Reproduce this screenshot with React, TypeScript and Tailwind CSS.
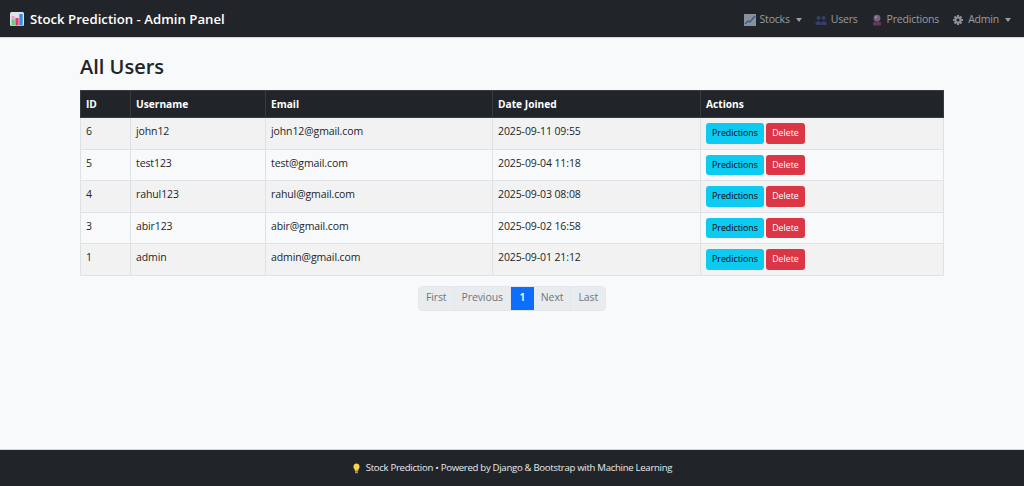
const font = "font-['Open_Sans','Noto_Sans',sans-serif]";

const users = [
  { id: 6, username: "john12", email: "john12@gmail.com", joined: "2025-09-11 09:55" },
  { id: 5, username: "test123", email: "test@gmail.com", joined: "2025-09-04 11:18" },
  { id: 4, username: "rahul123", email: "rahul@gmail.com", joined: "2025-09-03 08:08" },
  { id: 3, username: "abir123", email: "abir@gmail.com", joined: "2025-09-02 16:58" },
  { id: 1, username: "admin", email: "admin@gmail.com", joined: "2025-09-01 21:12" },
];

const pages = ["First", "Previous", "1", "Next", "Last"];

function ChartIcon() {
  return (
    <svg viewBox="0 0 14 14" className="w-[14px] h-[14px]">
      <rect x="0" y="0" width="14" height="14" rx="1.5" fill="#dfe2e8" />
      <rect x="1.5" y="8" width="3.2" height="5.5" fill="#5fd068" />
      <rect x="1.5" y="4" width="3.2" height="4" fill="#e9a0d0" />
      <rect x="5.4" y="6" width="3.2" height="7.5" fill="#e6376a" />
      <rect x="9.3" y="2" width="3.4" height="11.5" fill="#2f8fe0" />
    </svg>
  );
}

function TrendIcon() {
  return (
    <svg viewBox="0 0 12 12" className="w-[12px] h-[12px] opacity-60">
      <rect width="12" height="12" fill="#cfd8e6" />
      <path d="M1 10 L4 7 L6 8 L11 2" stroke="#3f7fc8" strokeWidth="1.4" fill="none" />
    </svg>
  );
}

function UsersIcon() {
  return (
    <svg viewBox="0 0 12 12" className="w-[12px] h-[12px] opacity-70">
      <circle cx="3.5" cy="4" r="2" fill="#3f4a8c" />
      <circle cx="8.5" cy="4" r="2" fill="#3f4a8c" />
      <path d="M0.5 11 V8.5 Q3.5 5.8 5.7 8.5 V11 Z" fill="#3f4a8c" />
      <path d="M6.3 11 V8.5 Q8.5 5.8 11.5 8.5 V11 Z" fill="#3f4a8c" />
    </svg>
  );
}

function ForecastIcon() {
  return (
    <svg viewBox="0 0 12 12" className="w-[12px] h-[12px] opacity-80">
      <circle cx="6" cy="4.2" r="3.4" fill="#8a6f9c" />
      <circle cx="5" cy="3.2" r="1" fill="#c9b8d4" />
      <rect x="2" y="8" width="8" height="3.4" rx="0.6" fill="#7a3f58" />
    </svg>
  );
}

function GearIcon() {
  return (
    <svg viewBox="0 0 12 12" className="w-[12px] h-[12px] opacity-70">
      <path d="M6 1 V11 M1 6 H11 M2.5 2.5 L9.5 9.5 M9.5 2.5 L2.5 9.5" stroke="#b9bec6" strokeWidth="2.2" />
      <circle cx="6" cy="6" r="3.5" fill="#b9bec6" />
      <circle cx="6" cy="6" r="1.5" fill="#212529" />
    </svg>
  );
}

function BulbIcon() {
  return (
    <svg viewBox="0 0 10 12" className="w-[9px] h-[11px]">
      <path d="M5 0.5 A3.6 3.6 0 0 1 7 7 V8.5 H3 V7 A3.6 3.6 0 0 1 5 0.5 Z" fill="#f5d547" />
      <rect x="3.4" y="9" width="3.2" height="2.2" fill="#9a9a8a" />
    </svg>
  );
}

function Caret() {
  return <span className="ml-[2px] w-0 h-0 border-x-[3.5px] border-x-transparent border-t-[4px] border-t-[#9b9d9e]" />;
}

function NavItem({ icon, label, caret }: { icon: React.ReactNode; label: string; caret?: boolean }) {
  return (
    <a className="flex items-center gap-[4px] text-[10.5px] tracking-[-0.2px] text-[#9b9d9e]">
      {icon}
      <span>{label}</span>
      {caret && <Caret />}
    </a>
  );
}

export default function App() {
  return (
    <div className={`${font} flex flex-col h-[486px] bg-[#f8f9fa] text-[#212529] overflow-hidden`}>
      <nav className="flex items-center justify-between h-[38px] shrink-0 bg-[#212529] border-b border-[#d5d6d7] pt-[2px] pl-[10px] pr-[13px]">
        <a className="flex items-center gap-[6px] text-[13.2px] font-semibold text-white">
          <ChartIcon />
          Stock Prediction - Admin Panel
        </a>
        <div className="flex items-center gap-[13px]">
          <NavItem icon={<TrendIcon />} label="Stocks" caret />
          <NavItem icon={<UsersIcon />} label="Users" />
          <NavItem icon={<ForecastIcon />} label="Predictions" />
          <NavItem icon={<GearIcon />} label="Admin" caret />
        </div>
      </nav>

      <main className="flex-1 px-[80px]">
        <h1 className="text-[20px] leading-[26px] font-semibold mt-[16px] mb-[10px]">All Users</h1>
        <table className="w-[863px] table-fixed border-collapse text-[10.5px] tracking-[-0.1px]">
          <colgroup>
            <col className="w-[50px]" />
            <col className="w-[135px]" />
            <col className="w-[227px]" />
            <col className="w-[208px]" />
            <col className="w-[243px]" />
          </colgroup>
          <thead>
            <tr className="h-[27px] bg-[#212529] text-white text-left">
              {["ID", "Username", "Email", "Date Joined", "Actions"].map((h) => (
                <th key={h} className="px-[5px] pt-[1px] text-[10.2px] tracking-normal font-bold border border-[#373b3e]">{h}</th>
              ))}
            </tr>
          </thead>
          <tbody>
            {users.map((u, i) => (
              <tr key={u.id} className={`h-[31.5px] leading-[16px] ${i % 2 === 0 ? "bg-[#f2f2f2]" : "bg-[#f8f9fa]"}`}>
                <td className="px-[5px] pt-[5px] align-top border border-[#dee2e6]">{u.id}</td>
                <td className="px-[5px] pt-[5px] align-top border border-[#dee2e6]">{u.username}</td>
                <td className="px-[5px] pt-[5px] align-top border border-[#dee2e6]">{u.email}</td>
                <td className="px-[5px] pt-[5px] align-top border border-[#dee2e6]">{u.joined}</td>
                <td className="px-[5px] pt-[5px] align-top border border-[#dee2e6]">
                  <div className="flex gap-[2px]">
                    <button className="h-[20.5px] w-[58px] rounded-[3px] bg-[#0dcaf0] text-[8.8px] tracking-normal text-black">Predictions</button>
                    <button className="h-[20.5px] w-[39px] rounded-[3px] bg-[#dc3545] text-[8.8px] tracking-normal text-white">Delete</button>
                  </div>
                </td>
              </tr>
            ))}
          </tbody>
        </table>

        <div className="flex justify-center mt-[10px]">
          <div className="flex h-[25px] rounded-[4px] overflow-hidden border border-[#e3e6ea] text-[10.5px] tracking-[-0.1px]">
            {pages.map((p) => (
              <span
                key={p}
                className={
                  p === "1"
                    ? "flex items-center px-[8.5px] bg-[#0d6efd] text-white font-semibold"
                    : "flex items-center px-[7px] bg-[#e9ecef] text-[#6c757d] border-r border-[#e3e6ea] last:border-r-0"
                }
              >
                {p}
              </span>
            ))}
          </div>
        </div>
      </main>

      <footer className="flex items-center justify-center gap-[5px] h-[37px] shrink-0 bg-[#212529] border-t border-[#d5d6d7] text-[9.6px] tracking-[-0.3px] text-[#e8e9ea]">
        <BulbIcon />
        <span>Stock Prediction • Powered by Django &amp; Bootstrap with Machine Learning</span>
      </footer>
    </div>
  );
}
